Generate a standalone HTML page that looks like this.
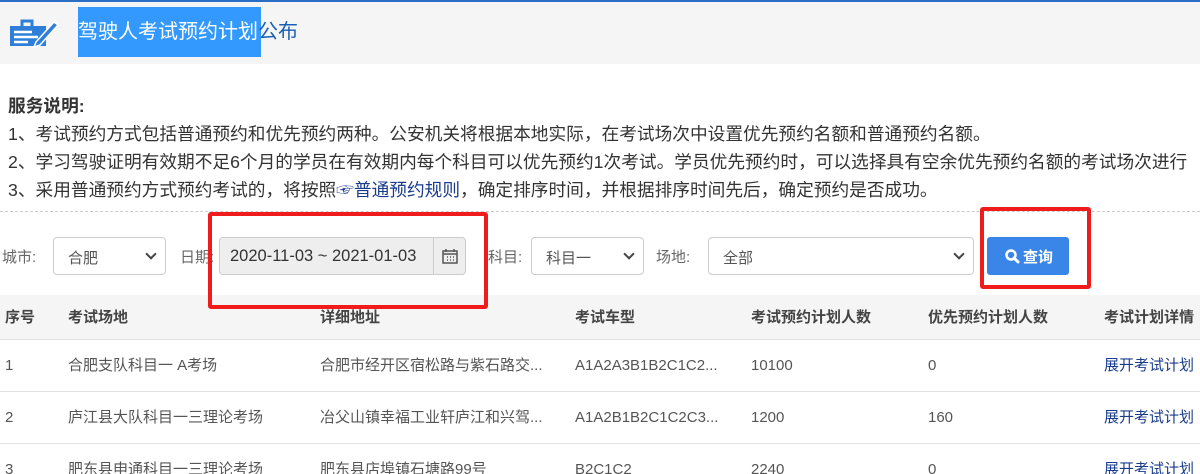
<!DOCTYPE html>
<html><head><meta charset="utf-8"><style>
*{margin:0;padding:0;box-sizing:border-box}
html,body{width:1200px;height:474px;overflow:hidden}
body{background:#fff;font-family:"Liberation Sans","Noto Sans CJK SC",sans-serif;color:#333;position:relative}
.topline{position:absolute;left:0;top:0;width:1200px;height:2px;background:#2b6fc4}
.header{position:absolute;left:0;top:2px;width:1200px;height:62px;background:#f5f5f5}
.hl{position:absolute;left:78px;top:7px;width:183px;height:50px;background:#3399ff}
.title{position:absolute;left:78px;top:15px;font-size:20px;white-space:nowrap;color:#fff;letter-spacing:0px}
.title span{color:#1a5fb4}
.svc{position:absolute;left:8px;top:92px;font-size:17.7px;line-height:28px;white-space:nowrap;color:#333}
.svc a{color:#1a3c8c}
.dash{position:absolute;left:0;top:211px;width:1200px;border-top:1px dashed #ccc}
.lbl{position:absolute;top:246px;font-size:15px;color:#666}
.sel{position:absolute;top:237px;height:38px;border:1px solid #ccc;border-radius:4px;background:#fff;font-size:15px;color:#555;padding:9px 0 0 14px}
.sel i{position:absolute;right:10px;top:12px;width:8px;height:8px;border-right:2px solid #444;border-bottom:2px solid #444;transform:rotate(45deg)}
.date{position:absolute;left:219px;top:237px;width:215px;height:38px;border:1px solid #ccc;border-radius:4px 0 0 4px;background:#eee;font-size:16.5px;color:#333;padding:9px 0 0 10px}
.cal{position:absolute;left:433px;top:237px;width:33px;height:38px;border:1px solid #ccc;background:#eee;border-radius:0 4px 4px 0}
.btn{position:absolute;left:987px;top:237px;width:82px;height:38px;background:#3a86e8;border-radius:3px;color:#fff;font-size:15px;font-weight:bold;padding:9px 0 0 36px}
.red{position:absolute;border:4px solid #f01c1c;border-radius:3px;z-index:5}
.thead{position:absolute;left:0;top:295px;width:1200px;height:45px;background:#f5f5f5;border-bottom:1px solid #e2e2e2}
.row{position:absolute;left:0;width:1200px;height:52px;border-bottom:1px solid #e2e2e2}
.c{position:absolute;font-size:15px;white-space:nowrap;color:#555;line-height:20px}
.thead .c{top:13px;font-weight:bold;color:#444}
.row .c{top:16px}
.lk{color:#1a3c8c!important}
</style></head><body>
<div class="topline"></div>
<div class="header"></div>
<svg style="position:absolute;left:6px;top:14px" width="54" height="36" viewBox="0 0 54 36">
<path d="M4 12h36v20H4z" fill="#2f7fd8"/>
<path d="M16 12v-5h10v5" fill="none" stroke="#2f7fd8" stroke-width="3"/>
<path d="M8 18h18M8 23h24M8 28h14" stroke="#fff" stroke-width="2.5"/>
<path d="M30 28L48 8l4 3-18 20-6 2z" fill="#2f7fd8" stroke="#fff" stroke-width="1.5"/>
</svg>
<div class="hl"></div>
<div class="title">驾驶人考试预约计划<span>公布</span></div>
<div class="svc"><b>服务说明:</b><br>1、考试预约方式包括普通预约和优先预约两种。公安机关将根据本地实际，在考试场次中设置优先预约名额和普通预约名额。<br>2、学习驾驶证明有效期不足6个月的学员在有效期内每个科目可以优先预约1次考试。学员优先预约时，可以选择具有空余优先预约名额的考试场次进行<br>3、采用普通预约方式预约考试的，将按照<a>☞普通预约规则</a>，确定排序时间，并根据排序时间先后，确定预约是否成功。</div>
<div class="dash"></div>
<div class="lbl" style="left:2px">城市:</div>
<div class="sel" style="left:53px;width:113px">合肥<i></i></div>
<div class="lbl" style="left:180px">日期:</div>
<div class="date">2020-11-03 ~ 2021-01-03</div>
<div class="cal"><svg style="position:absolute;left:8px;top:10px" width="16" height="16" viewBox="0 0 16 16"><rect x="1" y="3" width="14" height="12" fill="none" stroke="#555" stroke-width="1.5"/><path d="M1 6h14M5 9h1M8 9h1M11 9h1M5 12h1M8 12h1M11 12h1M4 1v3M12 1v3" stroke="#555" stroke-width="1.5"/></svg></div>
<div class="lbl" style="left:488px">科目:</div>
<div class="sel" style="left:531px;width:113px">科目一<i></i></div>
<div class="lbl" style="left:656px">场地:</div>
<div class="sel" style="left:708px;width:266px">全部<i></i></div>
<div class="btn">查询</div>
<svg style="position:absolute;left:1004px;top:248px" width="16" height="16" viewBox="0 0 16 16"><circle cx="7" cy="7" r="4.5" fill="none" stroke="#fff" stroke-width="2.5"/><path d="M10 10l4 4" stroke="#fff" stroke-width="3" stroke-linecap="round"/></svg>
<div class="thead">
<div class="c" style="left:5px">序号</div><div class="c" style="left:68px">考试场地</div><div class="c" style="left:320px">详细地址</div><div class="c" style="left:575px">考试车型</div><div class="c" style="left:751px">考试预约计划人数</div><div class="c" style="left:928px">优先预约计划人数</div><div class="c" style="left:1104px">考试计划详情</div>
</div>
<div class="row" style="top:340px"><div class="c" style="left:5px">1</div><div class="c" style="left:68px">合肥支队科目一 A考场</div><div class="c" style="left:320px">合肥市经开区宿松路与紫石路交...</div><div class="c" style="left:575px">A1A2A3B1B2C1C2...</div><div class="c" style="left:751px">10100</div><div class="c" style="left:928px">0</div><div class="c lk" style="left:1104px">展开考试计划</div></div>
<div class="row" style="top:392px"><div class="c" style="left:5px">2</div><div class="c" style="left:68px">庐江县大队科目一三理论考场</div><div class="c" style="left:320px">冶父山镇幸福工业轩庐江和兴驾...</div><div class="c" style="left:575px">A1A2B1B2C1C2C3...</div><div class="c" style="left:751px">1200</div><div class="c" style="left:928px">160</div><div class="c lk" style="left:1104px">展开考试计划</div></div>
<div class="row" style="top:444px"><div class="c" style="left:5px">3</div><div class="c" style="left:68px">肥东县申通科目一三理论考场</div><div class="c" style="left:320px">肥东县店埠镇石塘路99号</div><div class="c" style="left:575px">B2C1C2</div><div class="c" style="left:751px">2240</div><div class="c" style="left:928px">0</div><div class="c lk" style="left:1104px">展开考试计划</div></div>
<div class="red" style="left:208px;top:212px;width:280px;height:97px"></div>
<div class="red" style="left:980px;top:207px;width:111px;height:82px"></div>
</body></html>
